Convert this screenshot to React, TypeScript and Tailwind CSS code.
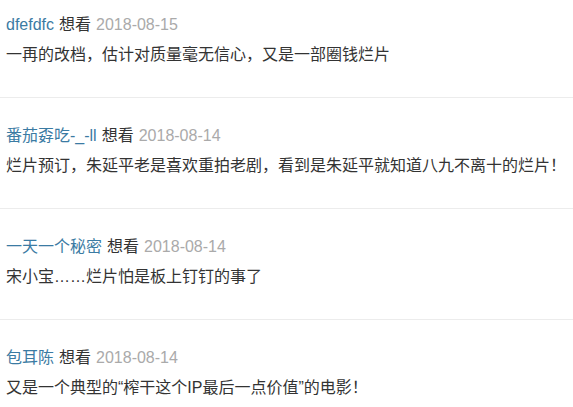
const comments = [
  {
    name: "dfefdfc",
    date: "2018-08-15",
    text: "一再的改档，估计对质量毫无信心，又是一部圈钱烂片",
  },
  {
    name: "番茄孬吃-_-ll",
    date: "2018-08-14",
    text: "烂片预订，朱延平老是喜欢重拍老剧，看到是朱延平就知道八九不离十的烂片！",
  },
  {
    name: "一天一个秘密",
    date: "2018-08-14",
    text: "宋小宝……烂片怕是板上钉钉的事了",
  },
  {
    name: "包耳陈",
    date: "2018-08-14",
    text: "又是一个典型的“榨干这个IP最后一点价值”的电影！",
  },
];

export default function App() {
  return (
    <div className="h-[407px] w-[573px] overflow-hidden bg-white font-['Liberation_Sans','Noto_Sans_CJK_SC',sans-serif] text-[16px]">
      <ul>
        {comments.map((c, i) => (
          <li
            key={i}
            className={
              "border-b border-[#ececec] pb-[31px] pl-[6px] " +
              (i === 0 ? "pt-[14px]" : "pt-[27px]")
            }
          >
            <div className="flex items-center gap-[5px] leading-[22px]">
              <a className="text-[#3b7ba3]">{c.name}</a>
              <span className="text-[#333]">想看</span>
              <span className="text-[#aaa]">{c.date}</span>
            </div>
            <p className="mt-[8px] leading-[22px] text-[#333]">{c.text}</p>
          </li>
        ))}
      </ul>
    </div>
  );
}
